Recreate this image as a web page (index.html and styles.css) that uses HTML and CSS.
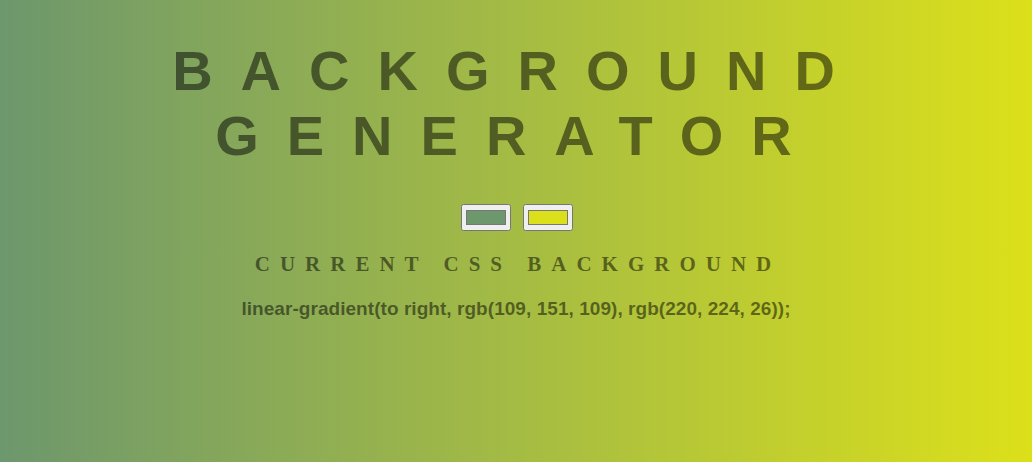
FILE: index.html
```html
<!DOCTYPE html>
<html>
<head>
<meta charset="utf-8">
<title>Background Generator</title>
<link rel="stylesheet" href="styles.css">
</head>
<body>
  <h1 class="title">Background Generator</h1>
  <div class="pickers">
    <input class="picker" type="color" name="color1" value="#6d976d">
    <input class="picker" type="color" name="color2" value="#dce01a">
  </div>
  <h3 class="subtitle">Current CSS Background</h3>
  <p class="css-code">linear-gradient(to right, rgb(109, 151, 109), rgb(220, 224, 26));</p>
</body>
</html>
```
FILE: styles.css
```css
html {
  height: 100%;
}

body {
  margin: 0;
  padding: 0 8px;
  min-height: 100%;
  box-sizing: border-box;
  background: linear-gradient(to right, rgb(109, 151, 109), rgb(220, 224, 26));
  color: rgba(0, 0, 0, 0.5);
  text-align: center;
  font-family: "Liberation Serif", serif;
}

.title {
  margin: 0;
  padding-top: 38px;
  padding-left: 3px;
  font-family: "Liberation Sans", Arial, sans-serif;
  font-weight: 700;
  font-size: 56px;
  line-height: 65px;
  letter-spacing: 0.5em;
  text-transform: uppercase;
}

.pickers {
  display: flex;
  justify-content: center;
  gap: 12px;
  margin-top: 36px;
  padding-left: 2px;
}

.picker {
  width: 50px;
  height: 27px;
  margin: 0;
  box-sizing: border-box;
}

.subtitle {
  margin: 21px 0 0;
  padding-left: 4px;
  font-family: "Liberation Serif", "Times New Roman", serif;
  font-weight: 700;
  font-size: 21px;
  line-height: 24px;
  letter-spacing: 10px;
  text-transform: uppercase;
}

.css-code {
  margin: 22px 0 0;
  font-family: "Liberation Sans", Arial, sans-serif;
  font-weight: 700;
  font-size: 19px;
  line-height: 22px;
  letter-spacing: 0.05px;
}
```
